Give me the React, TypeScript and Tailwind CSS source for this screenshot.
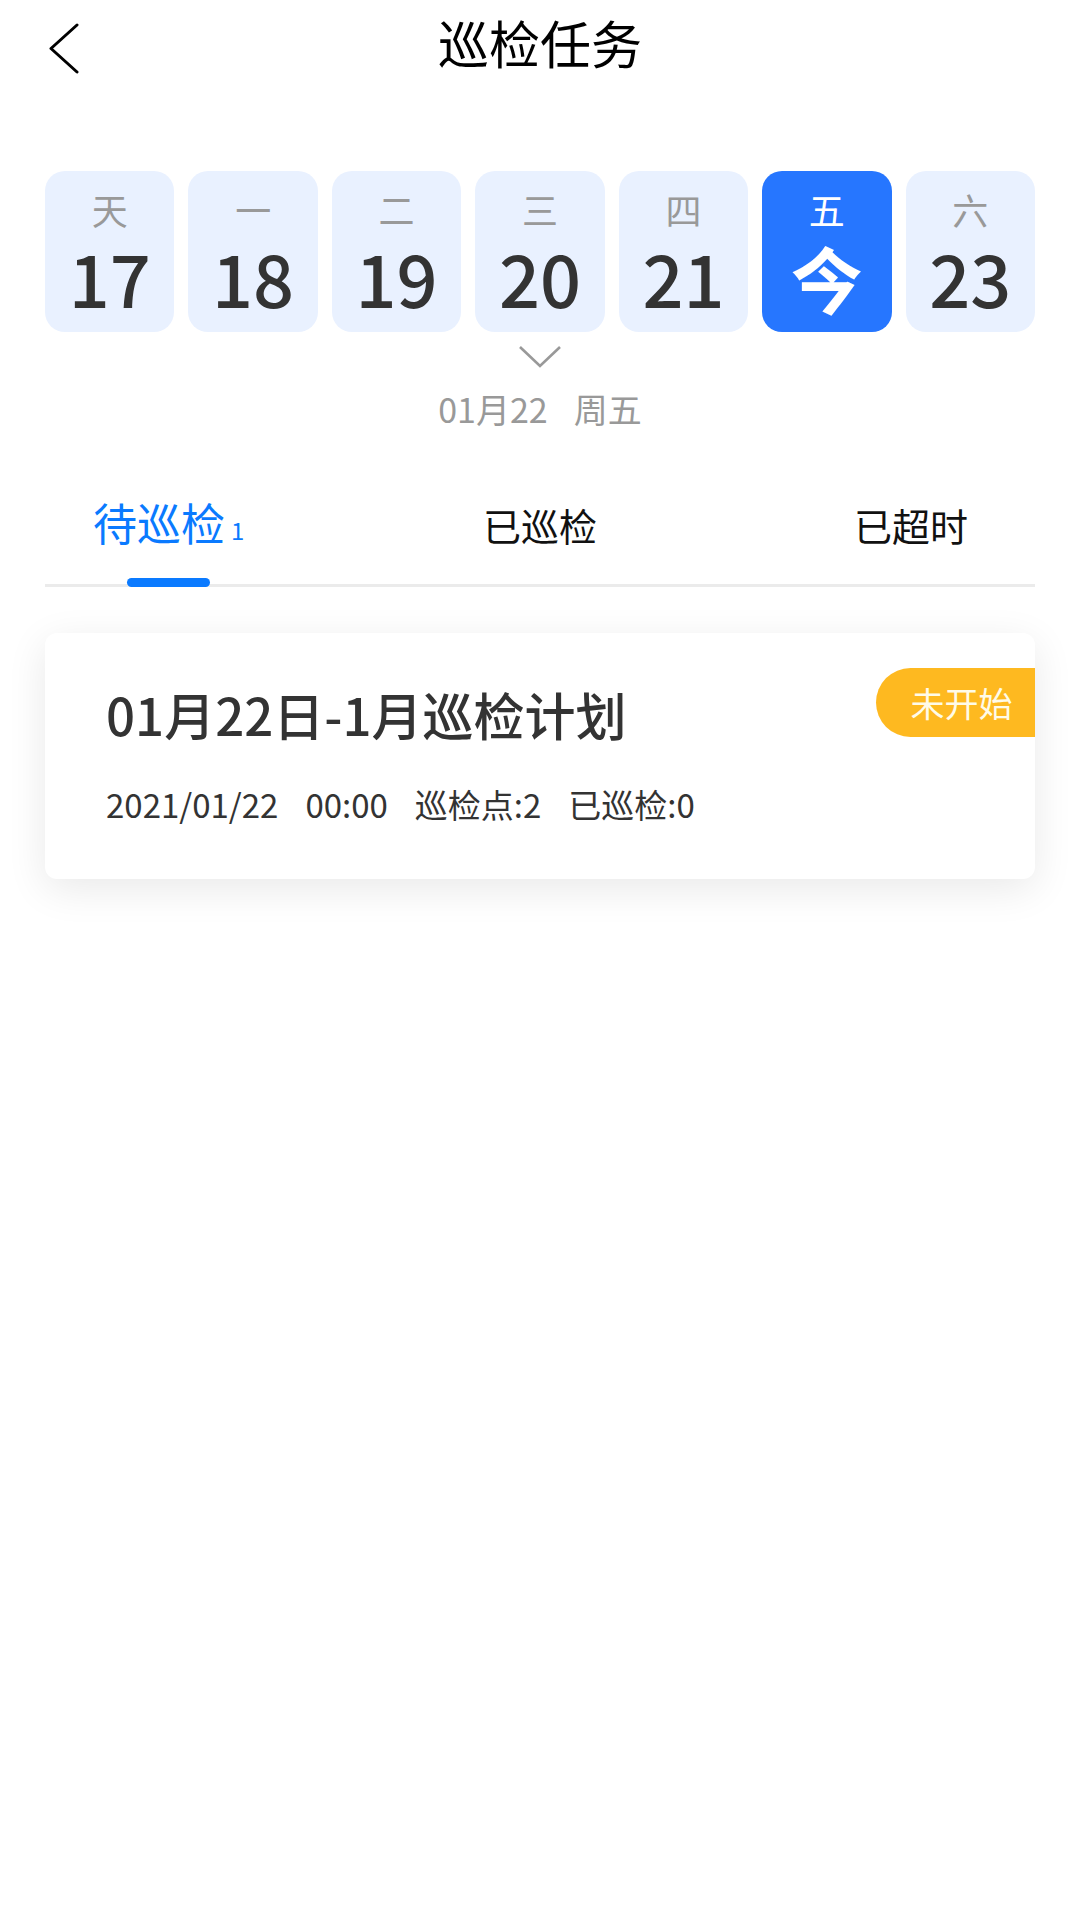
const days = [
  { week: '天', num: '17' },
  { week: '一', num: '18' },
  { week: '二', num: '19' },
  { week: '三', num: '20' },
  { week: '四', num: '21' },
  { week: '五', num: '今', active: true },
  { week: '六', num: '23' },
];

const font = { fontFamily: '"Noto Sans CJK SC", "Noto Sans", sans-serif' };

function DayCard({ week, num, active }: { week: string; num: string; active?: boolean }) {
  return (
    <div
      className={`h-[161px] rounded-[20px] flex flex-col items-center ${
        active ? 'bg-[#2676ff]' : 'bg-[#e9f1ff]'
      }`}
    >
      <div className={`mt-[18px] text-[36px] leading-[40px] ${active ? 'text-white' : 'text-[#999999]'}`}>
        {week}
      </div>
      <div
        className={`mt-[8px] text-[72px] leading-[80px] ${
          active ? 'text-white font-bold text-[64px]' : 'text-[#333333] font-medium'
        }`}
      >
        {num}
      </div>
    </div>
  );
}

export default function App() {
  return (
    <div className="w-[1080px] min-h-[1920px] bg-white" style={font}>
      <header className="h-[92px] grid grid-cols-[1fr_auto_1fr] items-center">
        <div className="pl-[48px] pt-[6px] flex items-center">
          <svg width="32" height="52" viewBox="0 0 32 52" fill="none">
            <path d="M29 2 L3 25.5 L29 49" stroke="#000000" strokeWidth="3" strokeLinecap="round" strokeLinejoin="round" />
          </svg>
        </div>
        <h1 className="mb-[8px] text-[51px] leading-[56px] text-black">巡检任务</h1>
        <div />
      </header>

      <div className="mt-[79px] px-[45px] grid grid-cols-7 gap-[14px]">
        {days.map(d => (
          <DayCard key={d.week} {...d} />
        ))}
      </div>

      <div className="mt-[13px] flex justify-center">
        <svg width="44" height="24" viewBox="0 0 44 24" fill="none">
          <path d="M2 2 L22 21 L42 2" stroke="#999999" strokeWidth="2.6" />
        </svg>
      </div>

      <div className="mt-[20px] flex justify-center gap-[26px] text-[34px] leading-[40px] text-[#999999]">
        <span>01月22</span>
        <span>周五</span>
      </div>

      <div className="mt-[68px] mx-[45px] border-b-[3px] border-[#ebebeb]">
        <div className="grid grid-cols-3 mb-[-3px]">
          <div className="pl-[48px] flex">
            <div className="flex flex-col items-center">
              <div className="flex items-end text-[#0a7aff]">
                <span className="text-[44px] leading-[50px]">待巡检</span>
                <span className="ml-[6px] text-[24px] leading-[34px]">1</span>
              </div>
              <div className="mt-[31px] h-[9px] w-[83px] rounded-full bg-[#0a7aff]" />
            </div>
          </div>
          <div className="flex justify-center pt-[5px]">
            <span className="text-[38px] leading-[46px] text-[#111111]">已巡检</span>
          </div>
          <div className="pr-[67px] flex justify-end pt-[5px]">
            <span className="text-[38px] leading-[46px] text-[#111111]">已超时</span>
          </div>
        </div>
      </div>

      <div className="mt-[46px] mx-[45px] h-[246px] relative rounded-[12px] bg-white shadow-[0_10px_40px_rgba(0,0,0,0.09)] pl-[61px]">
        <div className="absolute top-[35px] right-0 h-[69px] w-[159px] rounded-l-full bg-[#feb920] flex items-center justify-center pl-[12px]">
          <span className="text-[34px] leading-[40px] text-[#fffbe8]">未开始</span>
        </div>
        <div className="pt-[52px] text-[51px] leading-[58px] font-medium text-[#333333]">
          01月22日-1月巡检计划
        </div>
        <div className="mt-[41px] flex gap-[27px] text-[33px] leading-[40px] text-[#333333]">
          <span>2021/01/22</span>
          <span>00:00</span>
          <span>巡检点:2</span>
          <span>已巡检:0</span>
        </div>
      </div>
    </div>
  );
}
